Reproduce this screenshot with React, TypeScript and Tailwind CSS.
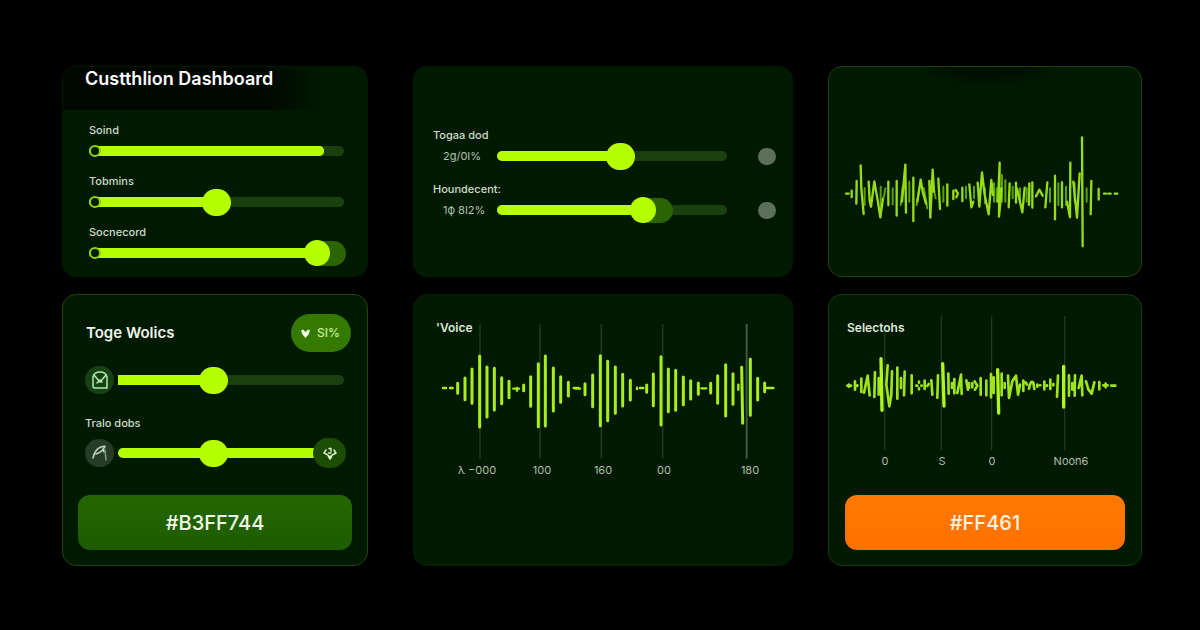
import React, { useState } from 'react';
import clsx from 'clsx';

type SliderProps = {
  id: string;
  initial: number;
  // overrides the filled part when it does not end at the thumb
  fill?: number;
  thumb?: 'large' | 'medium' | 'cap';
  start?: 'ring' | 'round' | 'square';
  ghost?: string;
};

const thumbs = {
  large: '[&::-webkit-slider-thumb]:w-[29px] [&::-webkit-slider-thumb]:h-[27px]',
  medium: '[&::-webkit-slider-thumb]:w-[26px] [&::-webkit-slider-thumb]:h-[26px]',
  cap: '[&::-webkit-slider-thumb]:w-[10px] [&::-webkit-slider-thumb]:h-[10px]',
};

const Slider = ({ id, initial, fill, thumb = 'large', start = 'round', ghost }: SliderProps) => {
  const [value, setValue] = useState(initial);

  return (
    <div className="relative flex items-center flex-1 h-7">
      <div className={clsx('w-full h-[10px] bg-[#1b400f] overflow-hidden', start === 'square' ? 'rounded-r-full' : 'rounded-full')}>
        <div className="h-full rounded-r-full bg-[#b5ff00]" style={{ width: `${fill ?? value}%` }} />
      </div>
      {ghost && <span className={clsx('absolute h-[25px] rounded-full bg-[#2b6400]', ghost)} />}
      {start === 'ring' && <span className="absolute left-0 w-3 h-3 rounded-full border-2 border-[#8fd400] bg-[#001a00]" />}
      <input
        id={id}
        type="range"
        value={value}
        onChange={(e) => setValue(Number(e.target.value))}
        className={clsx(
          'absolute inset-0 w-full h-full appearance-none bg-transparent cursor-pointer',
          '[&::-webkit-slider-thumb]:appearance-none [&::-webkit-slider-thumb]:rounded-full [&::-webkit-slider-thumb]:bg-[#b5ff00]',
          thumbs[thumb]
        )}
      />
    </div>
  );
};

const Card = ({ children, className }: { children: React.ReactNode; className?: string }) => (
  <section className={clsx('flex flex-col rounded-[14px] border bg-[#001a00] overflow-hidden', className)}>{children}</section>
);

const mixers: (SliderProps & { label: string })[] = [
  { id: 'soind', label: 'Soind', initial: 92, thumb: 'cap', start: 'ring' },
  { id: 'tobmins', label: 'Tobmins', initial: 50, start: 'ring' },
  { id: 'socnecord', label: 'Socnecord', initial: 94, thumb: 'medium', start: 'ring', ghost: 'w-10 -right-[2px]' },
];

const DashboardCard = () => (
  <Card className="mr-[10px] border-[#001c00]">
    <header className="h-[43px] pl-[22px] bg-linear-to-r from-[#000600] from-65% to-transparent to-85%">
      <h1 className="text-lg leading-6 font-semibold text-white whitespace-nowrap">Custthlion Dashboard</h1>
    </header>
    <div className="flex flex-col gap-[7px] pt-[11px] pb-[9px] pl-[26px] pr-[23px]">
      {mixers.map(({ label, ...slider }) => (
        <div key={slider.id}>
          <label htmlFor={slider.id} className="block text-[11px] leading-[18px] font-medium text-[#d0dccb]">{label}</label>
          <div className="flex -mt-[2px]">
            <Slider {...slider} />
          </div>
        </div>
      ))}
    </div>
  </Card>
);

const levels: (SliderProps & { label: string; amount: string })[] = [
  { id: 'togaa', label: 'Togaa dod', amount: '2g/0I%', initial: 54 },
  { id: 'houndecent', label: 'Houndecent:', amount: '1ϕ 8I2%', initial: 65, thumb: 'medium', ghost: 'w-10 left-[136px]' },
];

const LevelsCard = () => (
  <Card className="border-[#001c00]">
    <div className="flex flex-col gap-[10px] pt-[59px] pl-[19px] pr-4">
      {levels.map(({ label, amount, ...slider }) => (
        <div key={slider.id}>
          <label htmlFor={slider.id} className="block text-[11px] leading-[18px] font-medium text-[#d0dccb]">{label}</label>
          <div className="flex items-center -mt-[2px] pl-[10px]">
            <output htmlFor={slider.id} className="w-[54px] text-[11px] text-[#b3c2ad] whitespace-nowrap">{amount}</output>
            <Slider {...slider} />
            <button type="button" aria-label={`Reset ${label}`} className="ml-[31px] w-[18px] h-[17px] rounded-full bg-[#5c7059]" />
          </div>
        </div>
      ))}
    </div>
  </Card>
);

const SignalCard = () => (
  <Card className="border-[#21430b]">
    <svg viewBox="0 0 312 209" className="w-full" fill="none">
      <defs>
        <radialGradient id="shade">
          <stop offset="50%" stopColor="#001000" />
          <stop offset="100%" stopColor="#001a00" />
        </radialGradient>
      </defs>
      <ellipse cx="158" cy="-2" rx="76" ry="22" fill="url(#shade)" />
      <g transform="translate(-9 -12) scale(0.33333)" strokeLinecap="round" strokeLinejoin="round">
        <path
          stroke="#5c9f0d"
          strokeWidth="6"
          d="M134 400V450M182 395V480M192 425L196 400M218 400V448M242 450L248 395M268 380V440M290 450L298 400M312 400L322 460M341 400L347 430M370 395V440M438 395V430M462 395V430M495 400V445M522 385V440M530 400V440M546 360V440M556 375V440M578 395V430M600 400V440M620 400V440M690 400V440M715 385V450M738 395V450M764 385V440M800 400V440"
        />
        <path
          stroke="#98dc18"
          strokeWidth="7"
          d="M78 416H86M95 407V426M110 378L109 446M122 331L124 400L131 477M146 380L149 438L153 455L163 379L172 430L181 487L189 430M205 380V450M230 378V482M246 440L256 329L258 473M280 368V498M292 440L302 374L308 410L318 446M328 378L331 488L338 344L342 410M355 371L360 462M382 388V452M400 407V432M407 405L414 416L409 427M427 398V438M448 388L454 457L460 440M473 383L478 455L486 352L494 420L506 478L514 375L519 420M534 440L539 323L537 485L545 400M569 385L566 457M588 383V443M591 400L607 472L614 398M628 385L627 450M637 382V458M648 424L658 404L668 422M676 457L682 382M705 362V493M726 382V457M751 323L750 487L741 440M760 380L771 488L779 355M786 247L788 574M814 378L812 478M836 402V434M852 416H858M865 416H872M884 416H892"
        />
      </g>
    </svg>
  </Card>
);

const VoicesCard = () => (
  <Card className="mr-[10px] border-[#244500]">
    <div className="flex items-center justify-between pt-[19px] pl-[23px] pr-4">
      <h2 className="text-[15px] font-semibold text-[#f0f5ec]">Toge Wolics</h2>
      <button type="button" className="flex items-center gap-[6px] w-[60px] h-[38px] pl-[9px] rounded-full bg-[#357a00] text-xs font-medium text-[#c9f08e]">
        <svg viewBox="0 0 11 11" className="w-[11px] h-[11px]" fill="#f4ffe6">
          <path d="M1 2.5 3 1.5 5.5 4 8 1.5 10 2.5 8.5 6.5 5.5 10 2.5 6.5Z" />
        </svg>
        SI%
      </button>
    </div>
    <div className="flex flex-col pl-[22px] pr-[23px]">
      <div className="flex items-center gap-1 mt-[14px]">
        <label htmlFor="wolics" aria-label="Toge Wolics" className="flex items-center justify-center w-[29px] h-7 rounded-full bg-[#154210]">
          <svg viewBox="0 0 18 18" className="w-[18px] h-[18px]" fill="none" stroke="#b5e8b5" strokeWidth="1.5" strokeLinecap="round" strokeLinejoin="round">
            <path d="M2 6Q3 1 9 1T16 6V17H4Q2 17 2 15Z" />
            <path d="M3 4 9 11 15 4M6 12 9 9 11 11" />
          </svg>
        </label>
        <Slider id="wolics" initial={41} start="square" />
      </div>
      <label htmlFor="tralo" className="mt-5 text-[11px] leading-[18px] font-medium text-[#d0dccb]">Tralo dobs</label>
      <div className="relative flex items-center gap-1 mt-[7px]">
        <span className="flex items-center justify-center w-[29px] h-7 rounded-full bg-[#263c27]">
          <svg viewBox="0 0 18 18" className="w-[18px] h-[18px]" fill="none" stroke="#bfdabf" strokeWidth="1.5" strokeLinecap="round">
            <path d="M2 14Q4 5 10 3T13 4Q12 7 5 10M12 5 13 8" />
            <path d="M14 6 15 16" stroke="#7b9b83" />
          </svg>
        </span>
        <Slider id="tralo" initial={41} fill={92} />
        <button type="button" aria-label="Boost" className="absolute -right-[2px] flex items-center justify-center w-[33px] h-[30px] rounded-full bg-[#1d4d00]">
          <svg viewBox="0 0 14 14" className="w-[14px] h-[14px]" fill="none" stroke="#dcf5cf" strokeWidth="1.5" strokeLinecap="round" strokeLinejoin="round">
            <path d="M3 4 1 7 4 8.5 7 11 10 8.5 13 7 11 4M6 2.5H8V5M5.5 7H8" />
            <path d="M5.5 10.5H8.5L7 13Z" fill="#dcf5cf" />
          </svg>
        </button>
      </div>
    </div>
    <button type="button" className="h-[55px] mt-7 mb-[15px] mx-[15px] rounded-xl bg-linear-to-b from-[#246700] to-[#1d5c00] text-xl font-medium text-[#f2fbe9]">
      #B3FF744
    </button>
  </Card>
);

const WaveCard = () => (
  <Card className="pt-[21px] border-[#042104]">
    <h2 className="pl-[22px] text-xs leading-6 font-semibold text-[#dfe9da]">'Voice</h2>
    <svg viewBox="0 0 378 164" className="w-full -mt-6" fill="none">
      <g transform="translate(-9 -28) scale(0.33333)" strokeLinecap="round">
        <path stroke="#1a3a18" strokeWidth="5" d="M225 110V510M405 110V510M589 110V510M773 110V510" />
        <path stroke="#3c5c3a" strokeWidth="6" d="M1025 110V510" />
        <path
          stroke="#a8ee1c"
          strokeWidth="9"
          d="M158 286V316M180 270V335M201 243V346M224 204V417M246 237V387M268 241V366M290 269V347M312 280V329M356 291V308M377 266V355M400 227V416M421 204V414M445 240V369M467 266V343M490 283V324M540 287V320M563 261V356M586 203V413M608 220V398M631 237V376M653 259V354M676 277V336M725 291V313M745 258V353M768 206V411M790 243V371M812 247V367M835 267V350M857 278V333M880 285V319M917 286V315M938 263V346M962 230V384M984 257V349M1010 238L1013 406M1036 213V382M1058 271V336M1079 285V311"
        />
        <path
          stroke="#a8ee1c"
          strokeWidth="7"
          d="M114 300H123M135 300H143M325 302H342M336 300V308M506 300H520M512 302H525M696 299V303M705 300H715M889 301H904M1000 290V305M1086 300H1105"
        />
      </g>
      <g fill="#b0bfab" textAnchor="middle" className="text-[11px]">
        <text x="63" y="158">λ −000</text>
        <text x="128" y="158">100</text>
        <text x="189" y="158">160</text>
        <text x="250" y="158">00</text>
        <text x="336" y="158">180</text>
      </g>
    </svg>
  </Card>
);

const SelectorsCard = () => (
  <Card className="pt-[21px] border-[#1a3c08]">
    <h2 className="pl-[18px] text-xs leading-6 font-semibold text-[#dfe9da]">Selectohs</h2>
    <svg viewBox="0 0 312 160" className="w-full -mt-6" fill="none">
      <g transform="translate(-9 -28) scale(0.33333)" strokeLinecap="round" strokeLinejoin="round">
        <path stroke="#1d3d18" strokeWidth="4" d="M194 138V485M364 85V485M515 85V485M734 85V485" />
        <path
          stroke="#9fe41a"
          strokeWidth="8"
          d="M82 293H93M87 290V296M105 280V305M112 292V294M124 272V312M132 314L143 263L149 322M165 253L163 327M176 270V320M203 232L199 290L208 355L214 320L216 250M232 239V332M243 270V300M254 251L252 322M275 262V316M289 293H292M297 281V284M304 293H305M297 301V304M314 278V303M322 294L326 288M334 277L337 320M354 262L352 329M385 257L386 317M396 285V300M403 273V316M412 315L423 260L425 318M439 277L444 305M447 285V300M457 285V298M464 280L472 293L465 305M482 270V320M499 278V322M513 258V328M521 268V315M545 257V322M554 285V300M564 263L567 330L577 280L588 263L594 320L600 290M610 278V309M617 283L621 290M627 302Q632 274 640 284L643 303M652 290V296M660 292H661M673 281V304M681 292V294M691 275V303M700 288V292M714 263L711 326M747 262V323M757 285V305M765 262L764 323M776 300L785 263L787 322M798 280L805 304L815 317L823 283M838 282V304M850 292H863M857 287V298M874 293H886"
        />
        <path stroke="#b0f51c" strokeWidth="10" d="M183 212L186 367M368 227L372 354M533 245L536 375M731 235V357" />
      </g>
      <g fill="#b0bfab" textAnchor="middle" className="text-[11px]">
        <text x="56" y="149">0</text>
        <text x="113" y="149">S</text>
        <text x="163" y="149">0</text>
        <text x="242" y="149">Noon6</text>
      </g>
    </svg>
    <button type="button" className="h-[55px] mt-[19px] mb-[15px] mx-4 rounded-xl bg-linear-to-b from-[#ff7a00] to-[#ff7000] text-xl font-medium text-[#fff3e0]">
      #FF461
    </button>
  </Card>
);

export default function App() {
  return (
    <main className="min-h-screen bg-black pt-[66px] pb-16 pl-[62px] pr-[58px] font-['Inter','Liberation_Sans',sans-serif]">
      <div className="grid grid-cols-[316fr_380fr_314fr] gap-x-[35px] gap-y-[17px]">
        <DashboardCard />
        <LevelsCard />
        <SignalCard />
        <VoicesCard />
        <WaveCard />
        <SelectorsCard />
      </div>
    </main>
  );
}
